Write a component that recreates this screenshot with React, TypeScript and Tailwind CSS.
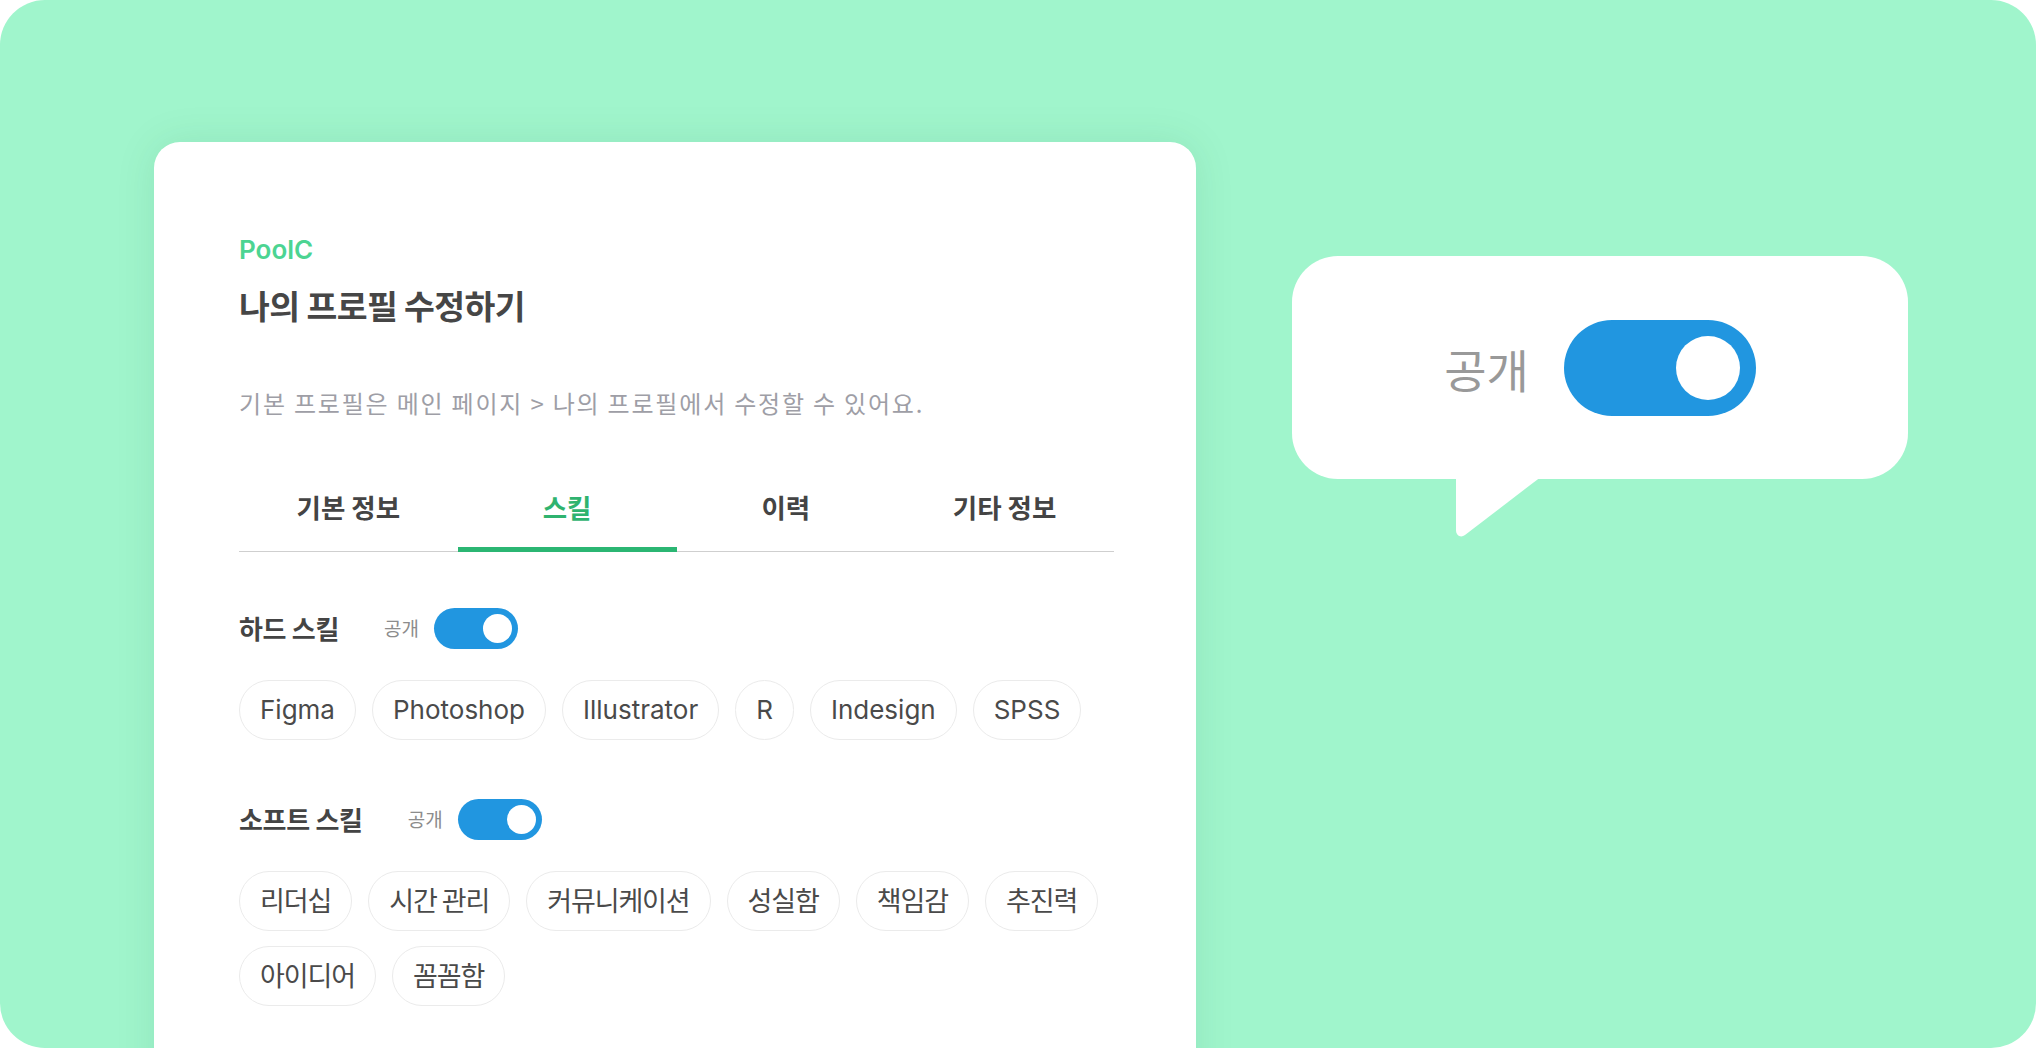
import React from "react";

const KO = "[font-family:'Noto_Sans_CJK_KR',sans-serif]";

function SmallToggle() {
  return (
    <div className="flex h-[41px] w-[84px] items-center justify-end rounded-full bg-[#2196e0] px-[6px]">
      <div className="h-[29px] w-[29px] rounded-full bg-white" />
    </div>
  );
}

function BigToggle() {
  return (
    <div className="flex h-[96px] w-[192px] items-center justify-end rounded-full bg-[#2196e0] px-[16px]">
      <div className="h-[64px] w-[64px] rounded-full bg-white" />
    </div>
  );
}

function Chip({ label }: { label: string }) {
  const ko = /[가-힣]/.test(label);
  return (
    <div
      className={
        ko
          ? "flex h-[60px] items-center rounded-full border-[1.5px] border-[#ebebeb] px-[20px] text-[27px] tracking-[-1.1px] text-[#4a4a4a] [font-family:'Noto_Sans_CJK_KR',sans-serif]"
          : "flex h-[60px] items-center rounded-full border-[1.5px] border-[#ebebeb] px-[20px] text-[26px] text-[#4a4a4a] [font-family:Inter,sans-serif]"
      }
    >
      {label}
    </div>
  );
}

function SkillSection({
  title,
  rows,
  first,
}: {
  title: string;
  rows: string[][];
  first?: boolean;
}) {
  return (
    <div className={first ? "mt-[56px]" : "mt-[59px]"}>
      <div className="flex h-[41px] items-center">
        <span className={`text-[26px] font-bold leading-[32px] tracking-[-0.3px] text-[#444] ${KO}`}>{title}</span>
        <span className={`ml-[45px] text-[19px] leading-[24px] text-[#8c8c8c] ${KO}`}>공개</span>
        <div className="ml-[15px]">
          <SmallToggle />
        </div>
      </div>
      <div className="mt-[31px] flex flex-col gap-[15px]">
        {rows.map((row, i) => (
          <div key={i} className="flex gap-[16px]">
            {row.map((c) => (
              <Chip key={c} label={c} />
            ))}
          </div>
        ))}
      </div>
    </div>
  );
}

export default function App() {
  const tabs = ["기본 정보", "스킬", "이력", "기타 정보"];
  return (
    <div className="h-[1048px] w-[2036px] bg-white">
      <div className="flex h-full w-full overflow-hidden rounded-[45px] bg-[#a0f5cc]">
        {/* Card */}
        <div className="ml-[154px] mt-[142px] h-[960px] w-[1042px] shrink-0 self-start rounded-[26px] bg-white pl-[85px] pr-[82px] pt-[95px] shadow-[0_0_40px_rgba(0,90,50,0.10)]">
          <div className="text-[26px] font-semibold leading-[26px] text-[#4cd492] [font-family:Inter,sans-serif]">
            PoolC
          </div>
          <div className={`mt-[21px] text-[33.5px] font-bold leading-[42px] tracking-[-0.6px] text-[#464646] ${KO}`}>
            나의 프로필 수정하기
          </div>
          <div className={`mt-[62px] text-[24px] leading-[30px] tracking-[1.8px] text-[#9e9ea6] ${KO}`}>
            기본 프로필은 메인 페이지 &gt; 나의 프로필에서 수정할 수 있어요.
          </div>
          <div className="mt-[73.5px] flex">
            {tabs.map((t, i) =>
              i === 1 ? (
                <div
                  key={t}
                  className={`flex h-[60px] flex-1 justify-center border-b-[5px] border-[#2bb673] text-[26.5px] font-bold leading-[30px] text-[#2fb36f] ${KO}`}
                >
                  {t}
                </div>
              ) : (
                <div
                  key={t}
                  className={`flex h-[60px] flex-1 justify-center border-b-[1.5px] border-[#cfcfcf] text-[26.5px] font-bold leading-[30px] text-[#444] ${KO}`}
                >
                  {t}
                </div>
              )
            )}
          </div>
          <SkillSection
            first
            title="하드 스킬"
            rows={[["Figma", "Photoshop", "Illustrator", "R", "Indesign", "SPSS"]]}
          />
          <SkillSection
            title="소프트 스킬"
            rows={[
              ["리더십", "시간 관리", "커뮤니케이션", "성실함", "책임감", "추진력"],
              ["아이디어", "꼼꼼함"],
            ]}
          />
        </div>

        {/* Speech bubble */}
        <div className="relative ml-[96px] mt-[256px] flex h-[223px] w-[616px] shrink-0 items-center justify-center gap-[35px] self-start rounded-[46px] bg-white">
          <span className={`text-[46px] leading-[60px] text-[#999] ${KO}`}>공개</span>
          <BigToggle />
          <svg
            className="absolute left-[164px] top-[222px]"
            width="84"
            height="60"
            viewBox="0 0 84 60"
          >
            <path d="M0 0 L0 52 C0 58 5 60 9 57 L83.5 0 Z" fill="#ffffff" />
          </svg>
        </div>
      </div>
    </div>
  );
}
